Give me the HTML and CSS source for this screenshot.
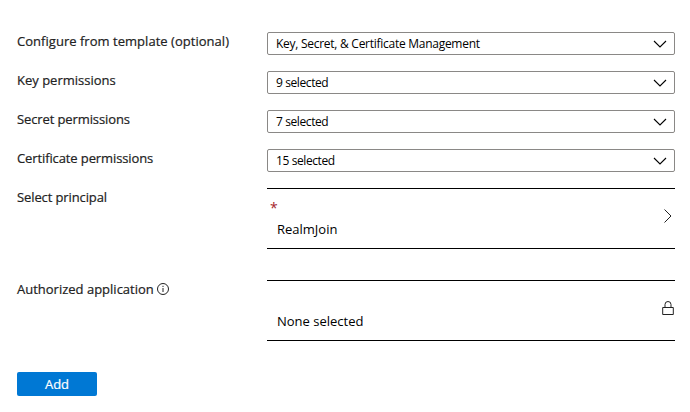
FILE: index.html
```
<!DOCTYPE html>
<html lang="en">
<head>
<meta charset="utf-8">
<title>Add access policy</title>
<link rel="stylesheet" href="styles.css">
</head>
<body>
<form class="form">
  <div class="row"><div class="label"><span class="wide">Configure from template (optional)</span></div><div class="select"><span class="template">Key, Secret, &amp; Certificate Management</span><svg class="chev" viewBox="0 0 14 8"><path d="M1 1l6 6 6-6"/></svg></div></div>
  <div class="row"><div class="label"><span>Key permissions</span></div><div class="select"><span class="count">9 selected</span><svg class="chev" viewBox="0 0 14 8"><path d="M1 1l6 6 6-6"/></svg></div></div>
  <div class="row"><div class="label"><span class="tight">Secret permissions</span></div><div class="select"><span class="count">7 selected</span><svg class="chev" viewBox="0 0 14 8"><path d="M1 1l6 6 6-6"/></svg></div></div>
  <div class="row"><div class="label"><span class="tight">Certificate permissions</span></div><div class="select"><span class="count">15 selected</span><svg class="chev" viewBox="0 0 14 8"><path d="M1 1l6 6 6-6"/></svg></div></div>
  <div class="row picker-row"><div class="label"><span class="tight">Select principal</span></div><div class="picker"><div class="copy"><span class="star">*</span><span class="value">RealmJoin</span></div><svg class="next" viewBox="0 0 8 14"><path d="M.5.5L7 7 .5 13.500"/></svg></div></div>
  <div class="row picker-row"><div class="label"><span>Authorized application</span><svg class="info" viewBox="0 0 12 12"><circle cx="6" cy="6" r="5.5"/><path d="M6 5v4M6 2.800v1.200"/></svg></div><div class="picker"><div class="copy"><span class="star"></span><span class="value">None selected</span></div><svg class="lock" viewBox="0 0 12 14"><path d="M.7 6.500h10.600v7H.7zM3 6.500V3.500a3 3 0 0 1 6 0v3"/></svg></div></div>
  <button class="add" type="button">Add</button>
</form>
</body>
</html>
```
FILE: styles.css
```
* { box-sizing: border-box; }
body { margin: 0; background: #fff; color: #222; font: 13px/18px "Open Sans", "Noto Sans", sans-serif; }
.form { width: 675px; padding: 32px 0 0 17px; }
.row { display: grid; grid-template-columns: 250px 408px; height: 39px; align-items: start; }
.label { display: flex; align-items: center; white-space: nowrap; -webkit-text-stroke: 0.2px #222; }
.wide { letter-spacing: 0.03px; }
.tight { letter-spacing: -0.11px; }
.select { display: flex; align-items: center; justify-content: space-between; height: 23px; padding: 0 7px 0 8px; border: 1px solid #8a8886; border-radius: 2px; font-size: 12px; color: #000; white-space: nowrap; }
.template { letter-spacing: -0.27px; }
.count { letter-spacing: -0.4px; }
svg { fill: none; stroke: #222; flex: none; }
.chev { width: 14px; height: 8px; stroke: #000; stroke-width: 1.1; }
.picker-row { height: 92px; }
.picker { display: flex; justify-content: space-between; height: 61px; border: solid #000; border-width: 1px 0; color: #000; }
.copy { display: flex; flex-direction: column; padding: 11px 0 0 4px; }
.star { height: 20px; margin-left: -1px; color: #a4262c; font-size: 14px; line-height: 15px; }
.value { padding-left: 6px; }
.next { width: 8px; height: 14px; margin: 20px 3px 0 0; }
.lock { width: 12px; height: 14px; margin: 20px 1px 0 0; }
.info { width: 12px; height: 12px; margin-left: 3px; }
.add { width: 80px; height: 24px; padding: 0 0 1px; border: 0; border-radius: 2px; background: #0078d4; color: #fff; font: inherit; -webkit-text-stroke: 0.2px #fff; }
```
